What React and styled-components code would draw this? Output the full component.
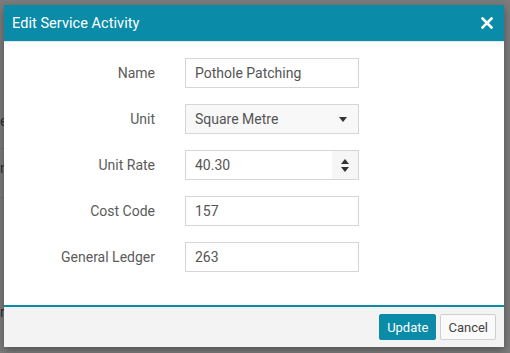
import React from 'react';
import styled, { createGlobalStyle } from 'styled-components';

const Global = createGlobalStyle`
    html, body {
        margin: 0;
        padding: 0;
        background: #7b7b7b;
        font-family: Roboto, 'Liberation Sans', sans-serif;
    }
`

const Page = styled.div`
    width: 510px;
    height: 353px;
    position: relative;
    overflow: hidden;
    background: #7b7b7b;
`

// bits of the page underneath the dim overlay, mostly hidden by the dialog
const Peek = styled.span`
    position: absolute;
    left: 0;
    top: ${props => props.top}px;
    font-size: 14px;
    color: #2c2c3a;
`

const PeekLine = styled.div`
    position: absolute;
    left: 0;
    top: ${props => props.top}px;
    width: 6px;
    height: 1px;
    background: #707070;
`

const Dialog = styled.div`
    position: absolute;
    left: 4px;
    top: 5px;
    width: 500px;
    height: 342px;
    background: #ffffff;
    box-shadow: 0 3px 8px rgba(0, 0, 0, 0.35);
    display: flex;
    flex-direction: column;
`

const Header = styled.div`
    height: 36px;
    background: #0a8ba7;
    border-bottom: 1px solid #e4e4e4;
    display: flex;
    align-items: center;
    justify-content: space-between;
    padding: 0 10px 0 8px;
    color: #ffffff;
`

const Title = styled.h1`
    margin: 0;
    font-size: 14.5px;
    font-weight: 400;
    letter-spacing: 0.05px;
`

const Close = styled.button`
    border: none;
    background: none;
    padding: 0;
    width: 14px;
    height: 14px;
    display: flex;
    align-items: center;
    justify-content: center;
    cursor: pointer;
`

const Body = styled.div`
    flex: 1;
    display: grid;
    grid-template-columns: 140px 174px;
    grid-auto-rows: 30px;
    row-gap: 16px;
    column-gap: 30px;
    padding: 16px 0 0 11px;
    align-content: start;
`

const Label = styled.label`
    font-size: 14px;
    color: #5b5b5b;
    text-align: right;
    align-self: center;
`

const Field = styled.div`
    position: relative;
    box-sizing: border-box;
    height: 30px;
    border: 1px solid #d6d6d6;
    background: ${props => props.select ? '#f8f8f8' : '#ffffff'};
    display: flex;
    align-items: center;
    padding-left: 9px;
    font-size: 14px;
    color: #555555;
`

const Value = styled.span`
    flex: 1;
`

const Caret = styled.div`
    width: 30px;
    height: 100%;
    display: flex;
    align-items: center;
    justify-content: center;
`

const Spinner = styled.div`
    width: 26px;
    height: 100%;
    background: #f6f6f6;
    display: flex;
    flex-direction: column;
    align-items: center;
    justify-content: center;
    gap: 3px;
`

const Footer = styled.div`
    height: 42px;
    box-sizing: border-box;
    border-top: 2px solid #0a8ba7;
    background: #f3f3f3;
    display: flex;
    align-items: center;
    justify-content: flex-end;
    gap: 4px;
    padding: 0 8px 0 0;
`

const Button = styled.button`
    height: 26px;
    box-sizing: border-box;
    padding: 0 7px;
    font-family: inherit;
    font-size: 13px;
    border-radius: 2px;
    border: 1px solid ${props => props.primary ? '#0a8ba7' : '#cfcfcf'};
    background: ${props => props.primary ? '#0a8ba7' : '#fafafa'};
    color: ${props => props.primary ? '#ffffff' : '#444444'};
    cursor: pointer;
`

const Down = () => (
    <svg width="8" height="5" viewBox="0 0 8 5"><path d="M0 0 L8 0 L4 5 Z" fill="#333" /></svg>
)

const Up = () => (
    <svg width="8" height="5" viewBox="0 0 8 5"><path d="M0 5 L8 5 L4 0 Z" fill="#333" /></svg>
)

const rows = [
    { label: 'Name', value: 'Pothole Patching' },
    { label: 'Unit', value: 'Square Metre', kind: 'select' },
    { label: 'Unit Rate', value: '40.30', kind: 'number' },
    { label: 'Cost Code', value: '157' },
    { label: 'General Ledger', value: '263' },
]

const App = () => {
    return (
        <Page>
            <Global />
            <Peek top={113}>eee</Peek>
            <PeekLine top={148} />
            <Peek top={160}>nnn</Peek>
            <PeekLine top={197} />
            <Peek top={304}>rrr</Peek>
            <Dialog>
                <Header>
                    <Title>Edit Service Activity</Title>
                    <Close>
                        <svg width="12" height="12" viewBox="0 0 12 12">
                            <path d="M1.5 1.5 L10.5 10.5 M10.5 1.5 L1.5 10.5" stroke="#fff" strokeWidth="2.6" strokeLinecap="square" />
                        </svg>
                    </Close>
                </Header>
                <Body>
                    {rows.map(r => (
                        <React.Fragment key={r.label}>
                            <Label>{r.label}</Label>
                            <Field select={r.kind === 'select'}>
                                <Value>{r.value}</Value>
                                {r.kind === 'select' && <Caret><Down /></Caret>}
                                {r.kind === 'number' && <Spinner><Up /><Down /></Spinner>}
                            </Field>
                        </React.Fragment>
                    ))}
                </Body>
                <Footer>
                    <Button primary>Update</Button>
                    <Button>Cancel</Button>
                </Footer>
            </Dialog>
        </Page>
    );
};

export default App;
